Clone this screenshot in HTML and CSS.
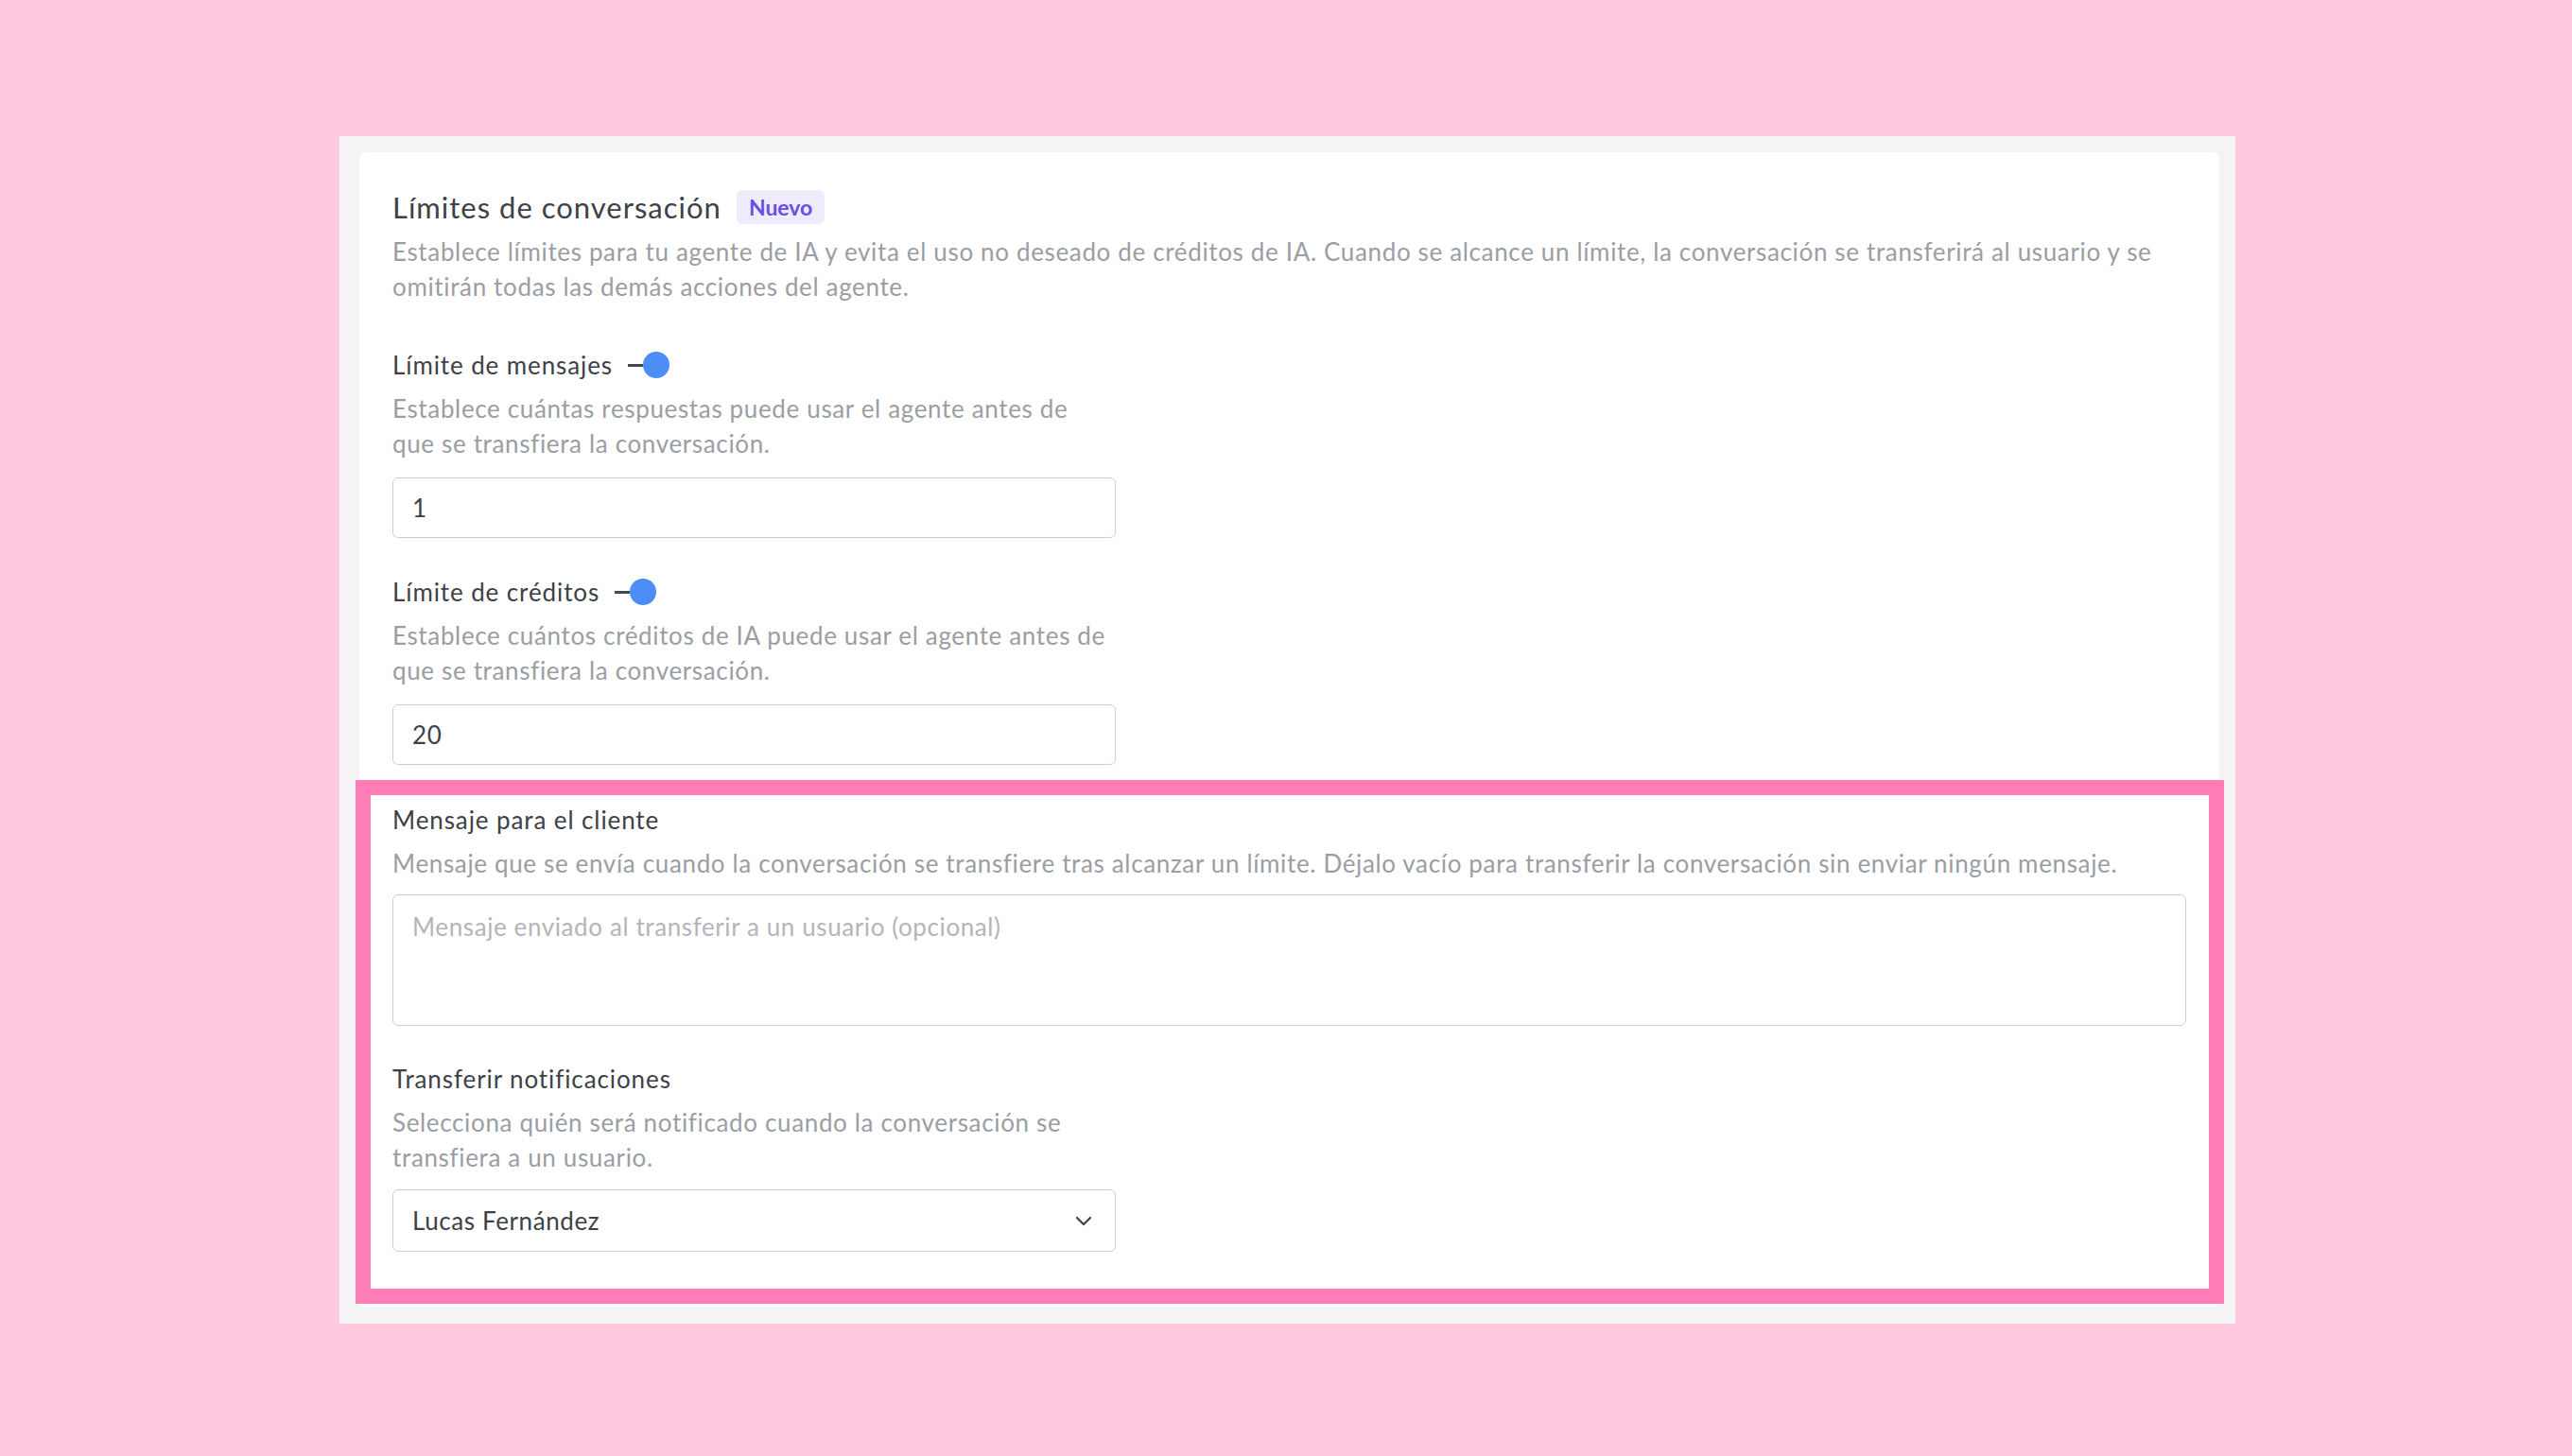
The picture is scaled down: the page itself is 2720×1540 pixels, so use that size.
FILE: index.html
```html
<!DOCTYPE html>
<html lang="es">

<head>
    <meta charset="UTF-8">
    <title>Límites de conversación</title>

    <link rel="stylesheet" href="styles.css">
</head>

<body>
    <main class="panel">
        <section class="tarjeta">

            <h2 class="titulo">Límites de conversación <span class="nuevo">Nuevo</span></h2>
            <p class="ayuda">Establece límites para tu agente de IA y evita el uso no deseado de créditos de IA. Cuando se alcance un límite, la conversación se transferirá al usuario y se omitirán todas las demás acciones del agente.</p>

            <div class="campo corto">
                <label class="etiqueta">Límite de mensajes <span class="interruptor"><i></i><b></b></span></label>
                <p class="ayuda">Establece cuántas respuestas puede usar el agente antes de que se transfiera la conversación.</p>
                <input class="entrada" type="text" value="1">
            </div>

            <div class="campo corto">
                <label class="etiqueta">Límite de créditos <span class="interruptor"><i></i><b></b></span></label>
                <p class="ayuda">Establece cuántos créditos de IA puede usar el agente antes de que se transfiera la conversación.</p>
                <input class="entrada" type="text" value="20">
            </div>

            <div class="destacado">
                <div class="campo">
                    <label class="etiqueta">Mensaje para el cliente</label>
                    <p class="ayuda">Mensaje que se envía cuando la conversación se transfiere tras alcanzar un límite. Déjalo vacío para transferir la conversación sin enviar ningún mensaje.</p>
                    <textarea class="entrada texto" placeholder="Mensaje enviado al transferir a un usuario (opcional)"></textarea>
                </div>

                <div class="campo corto">
                    <label class="etiqueta">Transferir notificaciones</label>
                    <p class="ayuda">Selecciona quién será notificado cuando la conversación se transfiera a un usuario.</p>
                    <div class="entrada selector">
                        <span>Lucas Fernández</span>
                        <svg width="18" height="11" viewBox="0 0 18 11">
                            <path d="M2 2 L9 9 L16 2" fill="none" stroke="#3d4148" stroke-width="2.2" stroke-linecap="round" stroke-linejoin="round" />
                        </svg>
                    </div>
                </div>
            </div>

        </section>
    </main>
</body>

</html>
```

FILE: styles.css
```css
body {
    margin: 0;
    background: #ffc9e0;
    font-family: Lato, "Noto Sans", sans-serif;
    color: #3d4148;
}

.panel {
    width: 2005px;
    height: 1256px;
    box-sizing: border-box;
    margin: 144px 0 0 359px;
    padding: 17px 17px 18px 21px;
    background: #f4f4f4;
}

.tarjeta {
    height: 100%;
    box-sizing: border-box;
    padding: 38px 35px 0 35px;
    background: #fff;
    border-radius: 7px;
}

.titulo {
    display: flex;
    align-items: center;
    gap: 16px;
    margin: 0;
    font-size: 31px;
    font-weight: 400;
    line-height: 40px;
    letter-spacing: 1px;
    color: #3d4148;
}

.nuevo {
    padding: 0 13px;
    height: 36px;
    line-height: 36px;
    border-radius: 6px;
    background: #eeebfd;
    color: #6a4ee6;
    font-size: 23px;
    font-weight: 700;
    letter-spacing: 0;
}

.ayuda {
    margin: 9px 0 0;
    font-size: 26px;
    line-height: 37px;
    letter-spacing: 0.65px;
    color: #9a9ea4;
}

.campo {
    margin-top: 46px;
}

.campo + .campo {
    margin-top: 39px;
}

.corto {
    width: 765px;
}

.etiqueta {
    display: flex;
    align-items: center;
    height: 36px;
    font-size: 26px;
    letter-spacing: 0.9px;
    color: #3d4148;
}

.campo .ayuda {
    margin-top: 10px;
}

/* interruptor activado: pista fina y bola azul */
.interruptor {
    display: flex;
    align-items: center;
    margin-left: 16px;
}

.interruptor i {
    width: 16px;
    height: 3px;
    background: #444a52;
}

.interruptor b {
    width: 28px;
    height: 28px;
    border-radius: 50%;
    background: #4c8df6;
}

.entrada {
    display: block;
    width: 100%;
    height: 64px;
    box-sizing: border-box;
    margin-top: 17px;
    padding: 0 20px;
    border: 1.5px solid #cdcdcd;
    border-radius: 6px;
    font-family: inherit;
    font-size: 26px;
    letter-spacing: 0.6px;
    color: #3d4148;
    background: #fff;
    outline: none;
}

.texto {
    height: 139px;
    margin-top: 14px;
    padding-top: 17px;
    resize: none;
}

.texto::placeholder {
    color: #b3b5b9;
}

.selector {
    display: flex;
    align-items: center;
    justify-content: space-between;
    height: 66px;
    margin-top: 15px;
    padding-right: 24px;
}

/* marco rosa sobre los dos ultimos campos */
.destacado {
    position: relative;
}

.destacado .campo:first-child {
    margin-top: 40px;
}

.destacado .campo + .campo {
    margin-top: 38px;
}

.destacado::after {
    content: "";
    position: absolute;
    top: -24px;
    left: -39px;
    right: -40px;
    bottom: -55px;
    border: 16px solid #ff7db6;
    pointer-events: none;
}
```
